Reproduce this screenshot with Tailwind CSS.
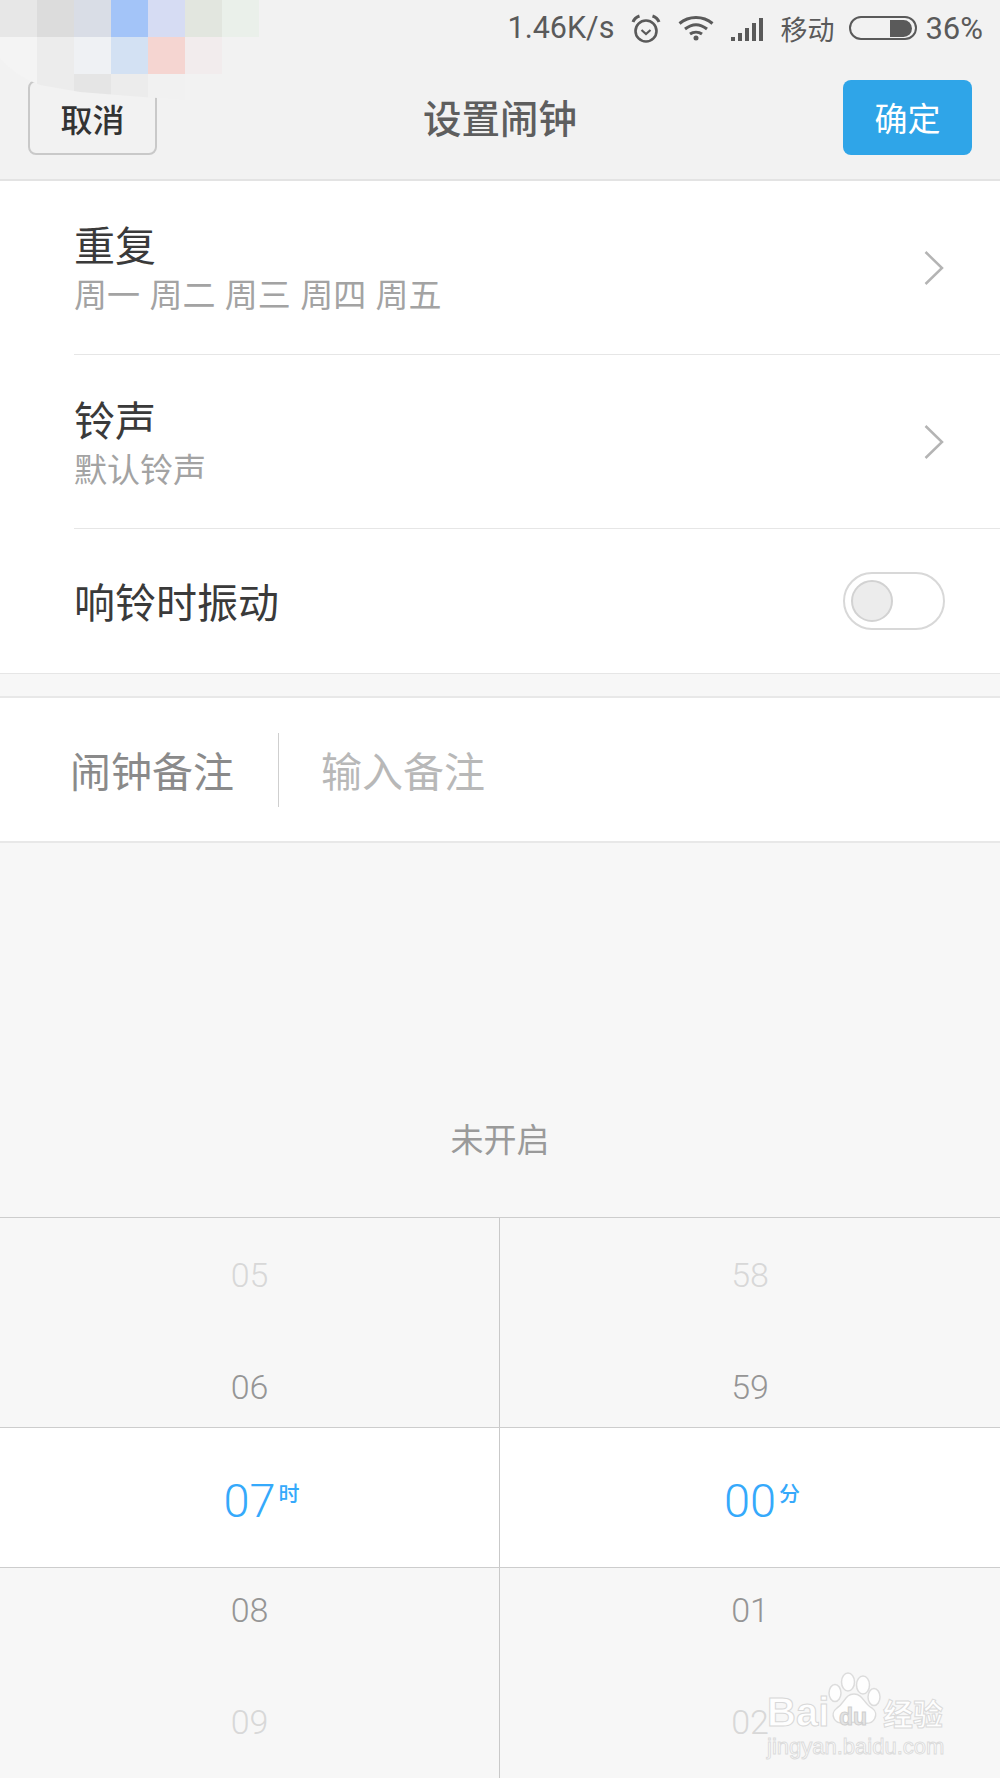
<!DOCTYPE html>
<html>
<head>
    <meta charset="utf-8">
    <title>设置闹钟</title>
    <meta name="viewport" content="width=device-width, initial-scale=1.0">
    <script src="https://cdn.jsdelivr.net/npm/@tailwindcss/browser@4"></script>
</head>
<body class="bg-[#f7f7f7]">
<div class="relative w-[1000px] h-[1778px] overflow-hidden flex flex-col bg-[#f7f7f7] font-['Roboto','Noto_Sans_CJK_SC',sans-serif]">

    <!-- Status bar -->
    <div class="h-[56px] bg-[#f2f2f2] flex items-center justify-end pr-[17px] text-[#5a5a5a]">
        <span class="text-[30.500px] leading-none">1.46K/s</span>
        <svg class="ml-[16px]" width="32" height="32" viewBox="0 0 32 32" fill="none" stroke="#5a5a5a" stroke-width="2.6">
            <circle cx="16" cy="19" r="10.5"/>
            <path d="M11.5 18l4.5 4 4.5-4" stroke-width="2.2"/>
            <path d="M3 10C4 7 6.500 5 9.500 4M29 10C28 7 25.500 5 22.500 4" stroke-width="3"/>
        </svg>
        <svg class="ml-[16px]" width="36" height="26" viewBox="0 0 36 26" fill="none" stroke="#5a5a5a" stroke-width="3">
            <path d="M1.500 8.500C11 0.500 25 0.500 34.500 8.500"/>
            <path d="M7 14C14 8.500 22 8.500 29 14"/>
            <path d="M12 19C15.500 16.500 20.500 16.500 24 19"/>
            <circle cx="18" cy="23" r="2.500" fill="#5a5a5a" stroke="none"/>
        </svg>
        <div class="ml-[17px] flex items-end gap-[3px] h-[24px] mt-[2px]">
            <div class="w-[4px] h-[4px] bg-[#5a5a5a]"></div>
            <div class="w-[4px] h-[8px] bg-[#5a5a5a]"></div>
            <div class="w-[4px] h-[13px] bg-[#5a5a5a]"></div>
            <div class="w-[4px] h-[18px] bg-[#5a5a5a]"></div>
            <div class="w-[4px] h-[23px] bg-[#5a5a5a]"></div>
        </div>
        <span class="ml-[17px] text-[27px] leading-none font-['Noto_Sans_CJK_SC',sans-serif]">移动</span>
        <div class="ml-[15px] w-[68px] h-[24px] rounded-full border-2 border-[#5a5a5a] flex justify-end items-center pr-[3px]">
            <div class="w-[22px] h-[17px] bg-[#5a5a5a] rounded-r-full"></div>
        </div>
        <span class="ml-[8px] text-[31px] leading-none">36%</span>
    </div>

    <!-- Header -->
    <div class="h-[125px] bg-[#f2f2f2] border-b-2 border-[#e3e3e3] flex items-start justify-between px-[28px] pt-[24px] font-['Noto_Sans_CJK_SC',sans-serif]">
        <div class="w-[129px] h-[75px] rounded-[8px] border-2 border-[#c9c9c9] flex items-center justify-center text-[32px] text-[#333] font-medium">取消</div>
        <div class="text-[38.500px] leading-[73px] text-[#5e5e5e] font-medium">设置闹钟</div>
        <div class="w-[129px] h-[75px] rounded-[8px] bg-[#2fa5e8] flex items-center justify-center text-[33px] text-white">确定</div>
    </div>

    <!-- Settings list -->
    <div class="bg-white pl-[74px] font-['Noto_Sans_CJK_SC',sans-serif] border-b border-[#e6e6e6]">
        <div class="h-[174px] border-b border-[#e6e6e6] flex items-center justify-between pr-[56px]">
            <div>
                <div class="text-[41px] leading-[50px] text-[#3a3a3a]">重复</div>
                <div class="text-[33px] leading-[50px] text-[#a3a3a3] [word-spacing:2px]">周一 周二 周三 周四 周五</div>
            </div>
            <svg width="20" height="36" viewBox="0 0 20 36" fill="none" stroke="#b4b4b4" stroke-width="2.500"><path d="M1.500 2L18 18L1.500 34"/></svg>
        </div>
        <div class="h-[174px] border-b border-[#e6e6e6] flex items-center justify-between pr-[56px]">
            <div class="pt-[2px]">
                <div class="text-[41px] leading-[50px] text-[#3a3a3a]">铃声</div>
                <div class="text-[33px] leading-[50px] text-[#a3a3a3]">默认铃声</div>
            </div>
            <svg width="20" height="36" viewBox="0 0 20 36" fill="none" stroke="#b4b4b4" stroke-width="2.500"><path d="M1.500 2L18 18L1.500 34"/></svg>
        </div>
        <div class="h-[144px] flex items-center justify-between pr-[55px]">
            <span class="text-[41px] leading-[60px] pb-[2px] text-[#3a3a3a]">响铃时振动</span>
            <div class="w-[102px] h-[58px] rounded-full border-2 border-[#d8d8d8] flex items-center pl-[6px]">
                <div class="w-[42px] h-[42px] rounded-full bg-[#ececec] border-2 border-[#d2d2d2]"></div>
            </div>
        </div>
    </div>

    <div class="h-[22px]"></div>

    <!-- Note -->
    <div class="h-[147px] bg-white border-y-2 border-[#e8e8e8] flex items-center pl-[70px] font-['Noto_Sans_CJK_SC',sans-serif]">
        <span class="text-[41px] leading-[60px] pb-[2px] text-[#8a8a8a] w-[208px]">闹钟备注</span>
        <div class="w-px h-[74px] bg-[#cfcfcf]"></div>
        <span class="ml-[42px] text-[41px] leading-[60px] pb-[2px] text-[#b8b8b8]">输入备注</span>
    </div>

    <!-- Alarm status -->
    <div class="h-[374px] flex items-end justify-center pb-[54px] text-[33px] leading-[50px] text-[#9a9a9a] font-['Noto_Sans_CJK_SC',sans-serif]">未开启</div>

    <!-- Time picker -->
    <div class="border-t border-[#cdcdcd] h-[210px] grid grid-cols-2 text-[34px] leading-[40px] text-center font-light">
        <div class="border-r border-[#c9c9c9] flex flex-col gap-[72px] pt-[37px]">
            <span class="text-[#d8d8d8]">05</span>
            <span class="text-[#959595]">06</span>
        </div>
        <div class="flex flex-col gap-[72px] pt-[37px]">
            <span class="text-[#d8d8d8]">58</span>
            <span class="text-[#959595]">59</span>
        </div>
    </div>
    <div class="h-[141px] bg-white border-y border-[#cdcdcd] grid grid-cols-2 text-[47px] text-[#35a9fb] text-center font-light">
        <div class="border-r border-[#c9c9c9] flex items-center justify-center pt-[5px]">
            <span class="relative leading-none">07<span class="absolute left-[calc(100%+3px)] top-[3px] text-[21px] leading-[24px] font-medium font-['Noto_Sans_CJK_SC',sans-serif] whitespace-nowrap">时</span></span>
        </div>
        <div class="flex items-center justify-center pt-[5px]">
            <span class="relative leading-none">00<span class="absolute left-[calc(100%+3px)] top-[3px] text-[21px] leading-[24px] font-medium font-['Noto_Sans_CJK_SC',sans-serif] whitespace-nowrap">分</span></span>
        </div>
    </div>
    <div class="flex-1 grid grid-cols-2 text-[34px] leading-[40px] text-center font-light">
        <div class="border-r border-[#c9c9c9] flex flex-col gap-[72px] pt-[22px]">
            <span class="text-[#959595]">08</span>
            <span class="text-[#d8d8d8]">09</span>
        </div>
        <div class="flex flex-col gap-[72px] pt-[22px]">
            <span class="text-[#959595]">01</span>
            <span class="text-[#d8d8d8]">02</span>
        </div>
    </div>

    <!-- Pixelated patch over the top left corner -->
    <svg class="absolute left-0 top-0" width="260" height="102" viewBox="0 0 260 102">
        <defs>
            <clipPath id="patch"><path d="M0 0H259V37H222V74H185V100L130 96L80 92L40 85Q15 76 0 58Z"/></clipPath>
        </defs>
        <g clip-path="url(#patch)">
            <rect x="0" y="0" width="37" height="37" fill="#e7e7e7"/>
            <rect x="37" y="0" width="37" height="37" fill="#dcdcdc"/>
            <rect x="74" y="0" width="37" height="37" fill="#d9dde6"/>
            <rect x="111" y="0" width="37" height="37" fill="#a3c4f8"/>
            <rect x="148" y="0" width="37" height="37" fill="#d6dcf3"/>
            <rect x="185" y="0" width="37" height="37" fill="#e2e6df"/>
            <rect x="222" y="0" width="37" height="37" fill="#eaf0ea"/>
            <rect x="0" y="37" width="37" height="37" fill="#f4f4f4"/>
            <rect x="37" y="37" width="37" height="37" fill="#ececec"/>
            <rect x="74" y="37" width="37" height="37" fill="#eff1f4"/>
            <rect x="111" y="37" width="37" height="37" fill="#d3e1f3"/>
            <rect x="148" y="37" width="37" height="37" fill="#f5d5d1"/>
            <rect x="185" y="37" width="37" height="37" fill="#f2eced"/>
            <rect x="0" y="74" width="37" height="28" fill="#f4f4f4"/>
            <rect x="37" y="74" width="37" height="28" fill="#ececec"/>
            <rect x="74" y="74" width="37" height="28" fill="#e5e5e5"/>
            <rect x="111" y="74" width="37" height="28" fill="#ececec"/>
            <rect x="148" y="74" width="37" height="28" fill="#f1f1f1"/>
        </g>
    </svg>

    <!-- Baidu watermark -->
    <div class="absolute left-[766px] top-[1668px] w-[184px] h-[92px]">
        <svg class="absolute left-[60px] top-[2px]" width="60" height="58" viewBox="0 0 60 58" fill="#fff" fill-opacity="0.85" stroke="#dcdcdc" stroke-width="1.500">
            <ellipse cx="22" cy="12" rx="6.500" ry="9"/>
            <ellipse cx="37" cy="15" rx="6.500" ry="9"/>
            <ellipse cx="9" cy="23" rx="6" ry="8.500"/>
            <ellipse cx="48" cy="27" rx="6" ry="8.500"/>
            <path d="M28 24C37 24 38 34 46 38C54 44 48 55 38 53C32 52 26 52 20 53C8 55 3 44 11 38C19 33 19 24 28 24Z"/>
        </svg>
        <span class="absolute left-[1px] top-[24px] text-[40px] leading-[40px] font-bold text-white/85 font-['Liberation_Sans',sans-serif] [-webkit-text-stroke:1px_#d8d8d8]">Bai</span>
        <span class="absolute left-[73px] top-[37px] text-[23px] leading-[24px] font-bold text-[#e4e4e4] font-['Liberation_Sans',sans-serif] [-webkit-text-stroke:1px_#cfcfcf]">du</span>
        <span class="absolute left-[117px] top-[25px] text-[30px] leading-[38px] font-bold text-white/85 font-['Noto_Sans_CJK_SC',sans-serif] [-webkit-text-stroke:1px_#dadada]">经验</span>
        <span class="absolute left-[1px] top-[66px] text-[22px] leading-[26px] whitespace-nowrap text-white/85 font-['Liberation_Sans',sans-serif] [-webkit-text-stroke:1px_#dcdcdc]">jingyan.baidu.com</span>
    </div>
</div>
</body>
</html>
